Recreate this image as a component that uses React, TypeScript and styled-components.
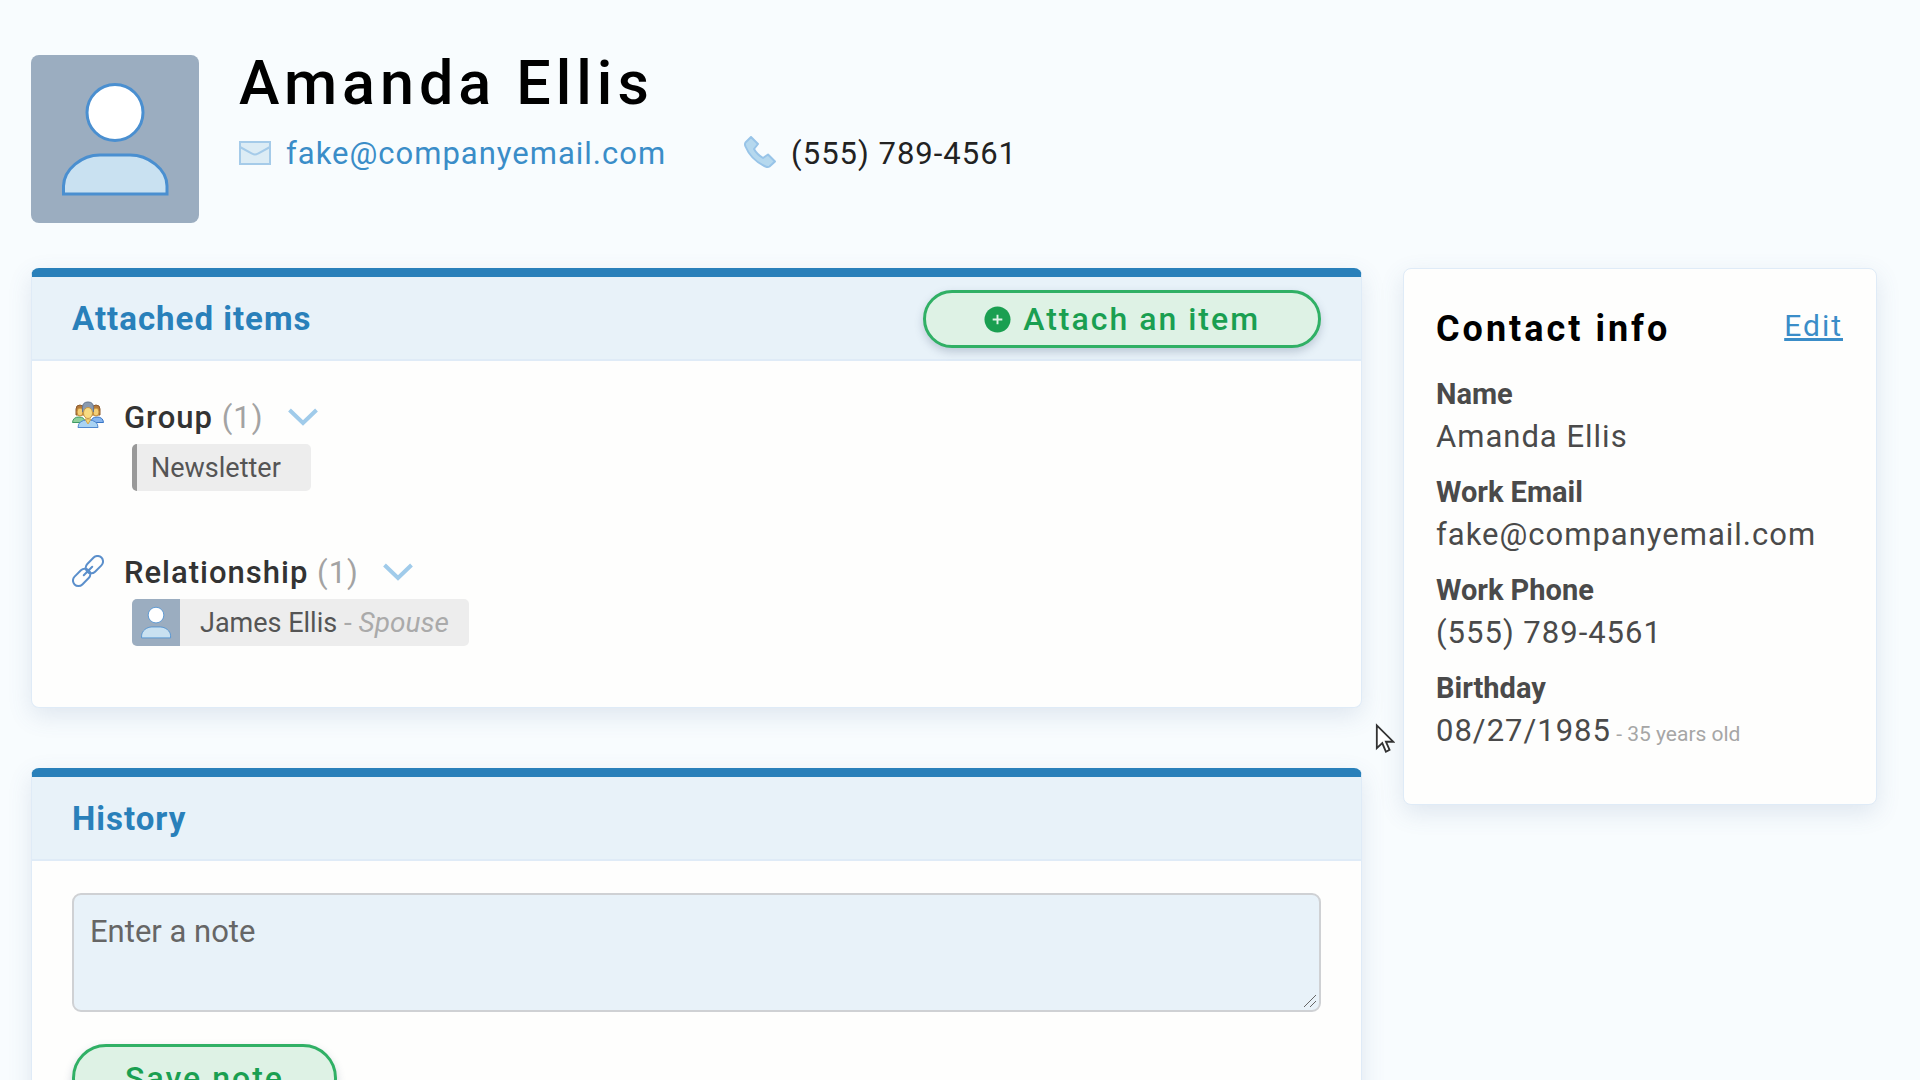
import React, { useState } from "react";
import styled, { createGlobalStyle } from "styled-components";

const GlobalStyle = createGlobalStyle`
  *, *::before, *::after { box-sizing: border-box; }
  html, body { margin: 0; min-height: 100%; }
  body {
    background: #f8fcfe;
    color: #000;
    font-family: Roboto, "Liberation Sans", sans-serif;
    height: 100vh;
    overflow: hidden;
  }
  h1, h2, h3, p, dl, dd { margin: 0; }
`;

const cardShadow = "0 8px 24px rgba(70, 100, 150, 0.14)";

const Page = styled.div`
  padding: 55px 43px 0 31px;
`;

const ProfileHeader = styled.header`
  display: flex;
  gap: 40px;
  margin-bottom: 45px;
`;

const AvatarFrame = styled.div`
  width: 168px;
  height: 168px;
  flex: none;
  border-radius: 8px;
  background: #9badc0;
  overflow: hidden;
`;

const PersonSvg = styled.svg`
  display: block;
  width: 100%;
  height: 100%;
`;

const Identity = styled.div`
  display: flex;
  flex-direction: column;
  gap: 24px;
`;

const FullName = styled.h1`
  font-size: 61px;
  line-height: 56px;
  font-weight: 500;
  letter-spacing: 5px;
`;

const ContactLine = styled.div`
  display: flex;
  gap: 78px;
  font-size: 31px;
  line-height: 38px;
  letter-spacing: 1px;
`;

const ContactEntry = styled.div`
  display: flex;
  align-items: center;
  gap: 15px;
  color: #222;
`;

const Columns = styled.div`
  display: grid;
  grid-template-columns: minmax(0, 1331fr) minmax(0, 474fr);
  gap: 41px;
  align-items: start;
`;

const MainColumn = styled.main`
  display: flex;
  flex-direction: column;
  gap: 60px;
`;

const Panel = styled.section`
  background: #fefefd;
  border: 1px solid #dfebf7;
  border-top: 9px solid #2980ba;
  border-radius: 8px;
  box-shadow: ${cardShadow};
`;

const PanelHeader = styled.div`
  display: flex;
  align-items: center;
  justify-content: space-between;
  height: 84px;
  padding: 2px 40px 0;
  background: #e8f2f9;
  border-bottom: 2px solid #dfebf7;
`;

const PanelTitle = styled.h2`
  font-size: 33px;
  line-height: 40px;
  font-weight: 700;
  letter-spacing: 1px;
  color: #2980ba;
`;

const PanelBody = styled.div`
  display: flex;
  flex-direction: column;
  align-items: flex-start;
  padding: 33px 40px 61px;
  gap: 58px;
`;

const PillButton = styled.button<{ $pad: number; $tall?: boolean }>`
  display: flex;
  align-items: center;
  justify-content: center;
  gap: 12px;
  height: ${(p) => (p.$tall ? 68 : 58)}px;
  padding: 0 ${(p) => p.$pad}px;
  border: 3px solid #30b065;
  border-radius: 34px;
  background: #def2e5;
  color: #1a9f51;
  font: 500 32px/40px Roboto, "Liberation Sans", sans-serif;
  letter-spacing: 2px;
  box-shadow: 0 4px 8px rgba(60, 80, 110, 0.25);
  cursor: pointer;
`;

const ItemGroup = styled.section`
  display: flex;
  flex-direction: column;
  align-items: flex-start;
  gap: 2px;
`;

const ItemHeading = styled.div`
  display: flex;
  align-items: center;
  height: 48px;
`;

const GroupTitle = styled.h3`
  margin-left: 20px;
  font-size: 31px;
  line-height: 40px;
  font-weight: 500;
  letter-spacing: 1px;
  color: #333;
`;

const Count = styled.span`
  font-weight: 400;
  color: #a3a3a3;
`;

const ToggleButton = styled.button`
  display: flex;
  margin-left: 24px;
  padding: 0;
  border: 0;
  background: none;
  cursor: pointer;
`;

const Chip = styled.a<{ $barred?: boolean }>`
  display: flex;
  align-items: center;
  height: 47px;
  margin-left: 60px;
  border-left: ${(p) => (p.$barred ? "5px solid #999" : "0")};
  border-radius: 5px;
  background: #ededed;
  color: #555;
  font-size: 27px;
  text-decoration: none;
  overflow: hidden;
`;

const ChipPicture = styled.span`
  width: 48px;
  height: 47px;
  background: #9badc0;
`;

const ChipText = styled.span<{ $left: number; $right: number }>`
  padding: 0 ${(p) => p.$right}px 0 ${(p) => p.$left}px;
`;

const Relation = styled.span`
  font-size: 28px;
  color: #aaa;
`;

const NoteForm = styled.form`
  display: flex;
  flex-direction: column;
  align-items: flex-start;
  gap: 32px;
  padding: 32px 40px 60px;
`;

const NoteField = styled.div`
  position: relative;
  width: 100%;
`;

const NoteBox = styled.textarea`
  display: block;
  width: 100%;
  height: 119px;
  padding: 18px 16px;
  border: 2px solid #cfd1d4;
  border-radius: 9px;
  background: #e8f2f9;
  color: #333;
  font: 400 31px/38px Roboto, "Liberation Sans", sans-serif;
  resize: none;
  outline: none;
  &::placeholder { color: #666; opacity: 1; }
`;

const Grip = styled.svg`
  position: absolute;
  right: 4px;
  bottom: 4px;
  pointer-events: none;
`;

const InfoCard = styled.aside`
  padding: 38px 33px 48px 32px;
  background: #fefefd;
  border: 1px solid #dfebf7;
  border-radius: 8px;
  box-shadow: ${cardShadow};
`;

const InfoHeader = styled.div`
  display: flex;
  align-items: flex-start;
  justify-content: space-between;
  margin-bottom: 22px;
`;

const InfoTitle = styled.h2`
  font-size: 36px;
  line-height: 44px;
  font-weight: 700;
  letter-spacing: 3px;
`;

const TextLink = styled.a<{ $spaced?: boolean }>`
  color: #3a8dc8;
  font-size: ${(p) => (p.$spaced ? 30 : 31)}px;
  line-height: 38px;
  letter-spacing: ${(p) => (p.$spaced ? 2 : 1)}px;
  text-decoration: ${(p) => (p.$spaced ? "underline" : "none")};
`;

const InfoList = styled.dl`
  display: flex;
  flex-direction: column;
  gap: 12px;
`;

const InfoLabel = styled.dt`
  font-size: 29px;
  line-height: 42px;
  font-weight: 700;
  color: #4a4a4a;
`;

const InfoValue = styled.dd`
  font-size: 31px;
  line-height: 44px;
  letter-spacing: 1px;
  color: #4a4a4a;
  white-space: nowrap;
`;

const Age = styled.span`
  font-size: 21px;
  letter-spacing: 0;
  color: #a6a6a6;
`;

const Pointer = styled.svg`
  position: absolute;
  left: 1375px;
  top: 723px;
  pointer-events: none;
`;

function Person({ label }: { label: string }) {
  return (
    <PersonSvg viewBox="0 0 168 168" role="img" aria-label={label}>
      <g stroke="#4a8fd0" strokeWidth="3">
        <circle cx="84" cy="57.500" r="28" fill="#fff" />
        <path d="M32.500 139V131C33 114 51 100 69 100H99C117 100 136 114 136 131V139Z" fill="#c9e1f1" />
      </g>
    </PersonSvg>
  );
}

function MailIcon() {
  return (
    <svg width="32" height="26" viewBox="0 0 32 26" aria-hidden="true">
      <path d="M1 1H31V23H1Z" fill="#dcecf5" stroke="#a5cbe9" strokeWidth="2" />
      <path d="M1 6L13 12.500Q16 14.500 19 12.500L31 6" fill="none" stroke="#a5cbe9" strokeWidth="2" />
    </svg>
  );
}

function PhoneIcon() {
  return (
    <svg width="32" height="36" viewBox="0 0 32 36" aria-hidden="true">
      <path
        d="M7 1L1.500 6.500Q.500 8 1.500 10.500Q7 24 21.500 30.500Q24 31.500 25.500 30.500L31 25.500L24 18.500L19 22Q13 18.500 10 13L14 8Z"
        fill="#b5d8ee"
        stroke="#98c4e8"
        strokeWidth="2"
        strokeLinejoin="round"
      />
    </svg>
  );
}

function PeopleIcon() {
  return (
    <svg width="32" height="34" viewBox="0 0 32 34" aria-hidden="true">
      <g strokeWidth="1">
        <path d="M.500 21.500Q1 16 7 16Q13 16 13 21.500Z" fill="#8fcf9c" stroke="#3f9a62" />
        <path d="M19 21.500Q19 16 25 16Q31 16 31.500 21.500Z" fill="#86b6ef" stroke="#3975c5" />
        <path d="M4 14V8Q4 4 8 4Q12 4 12 8V14Z" fill="#b4793b" stroke="#8d5c2e" />
        <path d="M20 14V8Q20 4 24 4Q28 4 28 8V14Z" fill="#b4793b" stroke="#8d5c2e" />
        <ellipse cx="8" cy="11" rx="3" ry="4" fill="#f4cf77" stroke="#c58e3a" />
        <ellipse cx="24" cy="11" rx="3" ry="4" fill="#f4cf77" stroke="#c58e3a" />
        <path d="M6 26.500Q6 19 16 19Q26 19 26 26.500Z" fill="#a9d3f3" stroke="#5089cf" />
        <path d="M13 18H19L16 23Z" fill="#f4d67b" stroke="#d5a84b" />
        <path d="M10.500 11V6.500Q10.500 1 16 1Q21.500 1 21.500 6.500V11Z" fill="#8a9aae" stroke="#65768d" />
        <ellipse cx="16" cy="12" rx="4.500" ry="5.500" fill="#f8dc82" stroke="#c99845" />
      </g>
    </svg>
  );
}

function LinkIcon() {
  return (
    <svg width="32" height="36" viewBox="0 0 32 36" aria-hidden="true">
      <g fill="none" stroke="#5b8fcb" strokeWidth="2" strokeLinecap="round" transform="rotate(-45 16 16)">
        <rect x="-3" y="10.500" width="20" height="11" rx="5.500" />
        <rect x="15" y="10.500" width="20" height="11" rx="5.500" />
        <path d="M10 16H22" />
      </g>
    </svg>
  );
}

function ChevronIcon() {
  return (
    <svg width="30" height="20" viewBox="0 0 30 20" aria-hidden="true">
      <path d="M1.500 2L15 15L28.500 2" fill="none" stroke="#a0cbea" strokeWidth="4" />
    </svg>
  );
}

function PlusIcon() {
  return (
    <svg width="27" height="27" viewBox="0 0 28 28" aria-hidden="true">
      <circle cx="14" cy="14" r="13.500" fill="#1a9f51" />
      <path d="M14 9V19M9 14H19" stroke="#def2e5" strokeWidth="2" />
    </svg>
  );
}

const contactFields = [
  { label: "Name", value: "Amanda Ellis" },
  { label: "Work Email", value: "fake@companyemail.com" },
  { label: "Work Phone", value: "(555) 789-4561" },
  { label: "Birthday", value: "08/27/1985", note: "- 35 years old" },
];

interface AttachedGroupProps {
  icon: React.ReactNode;
  title: string;
  count: number;
  children: React.ReactNode;
}

function AttachedGroup({ icon, title, count, children }: AttachedGroupProps) {
  const [open, setOpen] = useState(true);
  return (
    <ItemGroup>
      <ItemHeading>
        {icon}
        <GroupTitle>
          {title} <Count>({count})</Count>
        </GroupTitle>
        <ToggleButton type="button" aria-label={`Toggle ${title}`} aria-expanded={open} onClick={() => setOpen(!open)}>
          <ChevronIcon />
        </ToggleButton>
      </ItemHeading>
      {open && children}
    </ItemGroup>
  );
}

export default function App() {
  const [note, setNote] = useState("");
  return (
    <>
      <GlobalStyle />
      <Page>
        <ProfileHeader>
          <AvatarFrame>
            <Person label="Amanda Ellis" />
          </AvatarFrame>
          <Identity>
            <FullName>Amanda Ellis</FullName>
            <ContactLine>
              <ContactEntry>
                <MailIcon />
                <TextLink href="mailto:fake@companyemail.com">fake@companyemail.com</TextLink>
              </ContactEntry>
              <ContactEntry>
                <PhoneIcon />
                <span>(555) 789-4561</span>
              </ContactEntry>
            </ContactLine>
          </Identity>
        </ProfileHeader>

        <Columns>
          <MainColumn>
            <Panel>
              <PanelHeader>
                <PanelTitle>Attached items</PanelTitle>
                <PillButton type="button" $pad={58}>
                  <PlusIcon />
                  Attach an item
                </PillButton>
              </PanelHeader>
              <PanelBody>
                <AttachedGroup icon={<PeopleIcon />} title="Group" count={1}>
                  <Chip href="#newsletter" $barred>
                    <ChipText $left={14} $right={30}>Newsletter</ChipText>
                  </Chip>
                </AttachedGroup>
                <AttachedGroup icon={<LinkIcon />} title="Relationship" count={1}>
                  <Chip href="#james-ellis">
                    <ChipPicture>
                      <Person label="James Ellis" />
                    </ChipPicture>
                    <ChipText $left={20} $right={20}>
                      James Ellis <Relation>- <em>Spouse</em></Relation>
                    </ChipText>
                  </Chip>
                </AttachedGroup>
              </PanelBody>
            </Panel>

            <Panel>
              <PanelHeader>
                <PanelTitle>History</PanelTitle>
              </PanelHeader>
              <NoteForm onSubmit={(event) => event.preventDefault()}>
                <NoteField>
                  <NoteBox
                    aria-label="Note"
                    placeholder="Enter a note"
                    value={note}
                    onChange={(event) => setNote(event.target.value)}
                  />
                  <Grip width="14" height="14" viewBox="0 0 14 14" aria-hidden="true">
                    <path d="M1 13L13 1M7 13L13 7" stroke="#666" strokeWidth="1" />
                  </Grip>
                </NoteField>
                <PillButton type="submit" $pad={50} $tall>
                  Save note
                </PillButton>
              </NoteForm>
            </Panel>
          </MainColumn>

          <InfoCard>
            <InfoHeader>
              <InfoTitle>Contact info</InfoTitle>
              <TextLink href="#edit" $spaced>Edit</TextLink>
            </InfoHeader>
            <InfoList>
              {contactFields.map((field) => (
                <div key={field.label}>
                  <InfoLabel>{field.label}</InfoLabel>
                  <InfoValue>
                    {field.value}
                    {field.note && <Age> {field.note}</Age>}
                  </InfoValue>
                </div>
              ))}
            </InfoList>
          </InfoCard>
        </Columns>
      </Page>
      <Pointer width="20" height="32" viewBox="0 0 22 34" aria-hidden="true">
        <path d="M2 2V27L8 21.500L12 31L16 29L12 20H20Z" fill="#fff" stroke="#333" strokeWidth="2" />
      </Pointer>
    </>
  );
}
